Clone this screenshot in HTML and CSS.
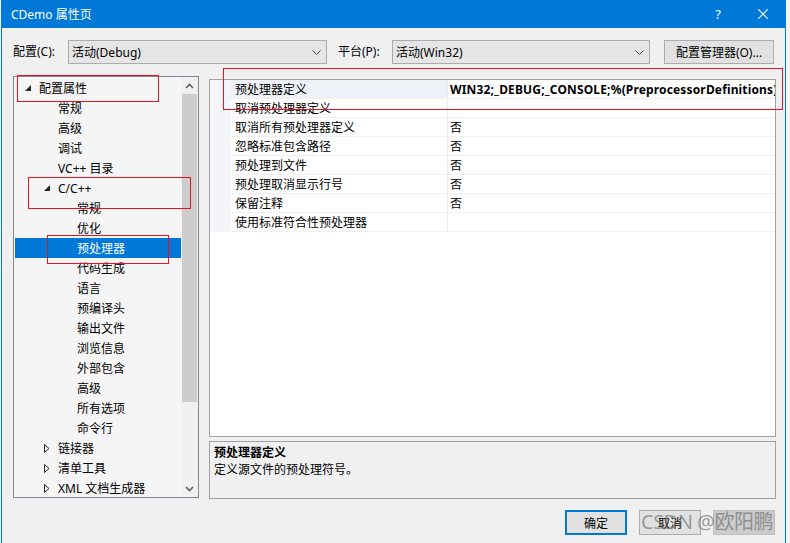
FILE: index.html
```html
<!DOCTYPE html>
<html>
	<head>
		<title>CDemo 属性页</title>
		<link rel="stylesheet" href="styles.css">
	</head>
	<body>
		<div class="window">
			<div class="titlebar">
				<span class="title">CDemo 属性页</span>
				<span class="help">?</span>
				<span class="close">
					<svg width="10" height="10" viewBox="0 0 10 10"><path d="M0 0L10 10M10 0L0 10" stroke="#fff" stroke-width="1.1"/></svg>
				</span>
			</div>

			<div class="content">
				<div class="toolbar">
					<span class="label label-config">配置(C):</span>
					<div class="combo combo-config">
						<span>活动(Debug)</span>
						<svg width="9" height="5" viewBox="0 0 9 5"><polyline points="0.5,0.5 4.5,4.5 8.5,0.5" fill="none" stroke="#444"/></svg>
					</div>
					<span class="label label-platform">平台(P):</span>
					<div class="combo combo-platform">
						<span>活动(Win32)</span>
						<svg width="9" height="5" viewBox="0 0 9 5"><polyline points="0.5,0.5 4.5,4.5 8.5,0.5" fill="none" stroke="#444"/></svg>
					</div>
					<button class="btn btn-manager">配置管理器(O)...</button>
				</div>

				<div class="main">
					<div class="tree">
						<div class="tree-list">
							<div class="node l0"><span class="twisty"><svg width="6" height="6" viewBox="0 0 6 6"><polygon points="6,0 6,6 0,6" fill="#262626"/></svg></span>配置属性</div>
							<div class="node l1"><span class="twisty"></span>常规</div>
							<div class="node l1"><span class="twisty"></span>高级</div>
							<div class="node l1"><span class="twisty"></span>调试</div>
							<div class="node l1"><span class="twisty"></span>VC++ 目录</div>
							<div class="node l1"><span class="twisty"><svg width="6" height="6" viewBox="0 0 6 6"><polygon points="6,0 6,6 0,6" fill="#262626"/></svg></span>C/C++</div>
							<div class="node l2"><span class="twisty"></span>常规</div>
							<div class="node l2"><span class="twisty"></span>优化</div>
							<div class="node l2 selected"><span class="twisty"></span>预处理器</div>
							<div class="node l2"><span class="twisty"></span>代码生成</div>
							<div class="node l2"><span class="twisty"></span>语言</div>
							<div class="node l2"><span class="twisty"></span>预编译头</div>
							<div class="node l2"><span class="twisty"></span>输出文件</div>
							<div class="node l2"><span class="twisty"></span>浏览信息</div>
							<div class="node l2"><span class="twisty"></span>外部包含</div>
							<div class="node l2"><span class="twisty"></span>高级</div>
							<div class="node l2"><span class="twisty"></span>所有选项</div>
							<div class="node l2"><span class="twisty"></span>命令行</div>
							<div class="node l1"><span class="twisty"><svg width="6" height="9" viewBox="0 0 6 9"><polygon points="0.5,0.5 5,4.5 0.5,8.5" fill="none" stroke="#262626"/></svg></span>链接器</div>
							<div class="node l1"><span class="twisty"><svg width="6" height="9" viewBox="0 0 6 9"><polygon points="0.5,0.5 5,4.5 0.5,8.5" fill="none" stroke="#262626"/></svg></span>清单工具</div>
							<div class="node l1"><span class="twisty"><svg width="6" height="9" viewBox="0 0 6 9"><polygon points="0.5,0.5 5,4.5 0.5,8.5" fill="none" stroke="#262626"/></svg></span>XML 文档生成器</div>
						</div>
						<div class="scrollbar">
							<div class="arrow">
								<svg width="9" height="6" viewBox="0 0 9 6"><polyline points="1,5 4.5,1.5 8,5" fill="none" stroke="#606060" stroke-width="1.6"/></svg>
							</div>
							<div class="track"><div class="thumb"></div></div>
							<div class="arrow">
								<svg width="9" height="6" viewBox="0 0 9 6"><polyline points="1,1 4.5,4.5 8,1" fill="none" stroke="#606060" stroke-width="1.6"/></svg>
							</div>
						</div>
					</div>

					<div class="right">
						<div class="grid">
							<div class="row active">
								<div class="gutter"></div>
								<div class="name">预处理器定义</div>
								<div class="value bold">WIN32;_DEBUG;_CONSOLE;%(PreprocessorDefinitions)</div>
							</div>
							<div class="row">
								<div class="gutter"></div>
								<div class="name">取消预处理器定义</div>
								<div class="value"></div>
							</div>
							<div class="row">
								<div class="gutter"></div>
								<div class="name">取消所有预处理器定义</div>
								<div class="value">否</div>
							</div>
							<div class="row">
								<div class="gutter"></div>
								<div class="name">忽略标准包含路径</div>
								<div class="value">否</div>
							</div>
							<div class="row">
								<div class="gutter"></div>
								<div class="name">预处理到文件</div>
								<div class="value">否</div>
							</div>
							<div class="row">
								<div class="gutter"></div>
								<div class="name">预处理取消显示行号</div>
								<div class="value">否</div>
							</div>
							<div class="row">
								<div class="gutter"></div>
								<div class="name">保留注释</div>
								<div class="value">否</div>
							</div>
							<div class="row">
								<div class="gutter"></div>
								<div class="name">使用标准符合性预处理器</div>
								<div class="value"></div>
							</div>
						</div>
						<div class="desc">
							<div class="desc-title">预处理器定义</div>
							<div class="desc-text">定义源文件的预处理符号。</div>
						</div>
					</div>
				</div>

				<div class="buttons">
					<button class="btn btn-ok">确定</button>
					<button class="btn">取消</button>
					<button class="btn btn-disabled"></button>
				</div>
			</div>
		</div>

		<!-- red marks drawn on the screenshot -->
		<div class="mark mark-1"></div>
		<div class="mark mark-2"></div>
		<div class="mark mark-3"></div>
		<div class="mark mark-4"></div>

		<div class="watermark">CSDN @欧阳鹏</div>
	</body>
</html>
```

FILE: styles.css
```css
body{
	margin: 0;
	background-color: #f4f4f4;
	font-family: "Noto Sans", "Noto Sans CJK SC", sans-serif;
	font-size: 12px;
	color: #000;
	overflow: hidden;
}

.window{
	box-sizing: border-box;
	width: 785px;
	height: 543px;
	margin-left: 1px;
	background-color: #f0f0f0;
	border-left: 1px solid #0078d7;
	border-right: 1px solid #0078d7;
}

.titlebar{
	display: flex;
	align-items: center;
	height: 28px;
	background-color: #0078d7;
	color: white;
}
.title{
	padding-left: 9px;
	font-size: 12px;
	flex: 1;
}
.help{
	width: 46px;
	text-align: center;
	font-size: 13px;
}
.close{
	width: 44px;
	display: flex;
	justify-content: center;
}

.content{
	padding: 12px 0 0 11px;
}

.toolbar{
	display: flex;
	align-items: center;
	height: 24px;
}
.label{
	line-height: 24px;
}
.label-config{
	width: 55px;
}
.label-platform{
	width: 54px;
	margin-left: 11px;
}
.combo{
	box-sizing: border-box;
	display: flex;
	align-items: center;
	justify-content: space-between;
	height: 24px;
	padding: 0 5px 0 3px;
	background-color: #e5e5e5;
	border: 1px solid #acacac;
}
.combo-config{
	width: 259px;
}
.combo-platform{
	width: 258px;
}

.btn{
	box-sizing: border-box;
	height: 25px;
	background-color: #e1e1e1;
	border: 1px solid #adadad;
	font-family: "Noto Sans", "Noto Sans CJK SC", sans-serif;
	font-size: 12px;
	color: #000;
	padding: 0;
}
.btn-manager{
	width: 110px;
	height: 24px;
	margin-left: 14px;
}

.main{
	display: flex;
	margin-top: 12px;
}

.tree{
	box-sizing: border-box;
	display: flex;
	width: 186px;
	height: 422px;
	background-color: #f5f5f5;
	border: 1px solid #828790;
}
.tree-list{
	flex: 1;
	padding: 1px 0 0 1px;
	overflow: hidden;
}
.node{
	display: flex;
	align-items: center;
	height: 20px;
	white-space: nowrap;
}
.l0{
	padding-left: 5px;
}
.l1{
	padding-left: 24px;
}
.l2{
	padding-left: 43px;
}
.twisty{
	display: flex;
	align-items: center;
	width: 19px;
	height: 20px;
	padding-left: 5px;
	box-sizing: border-box;
}
.selected{
	background-color: #0078d7;
	color: white;
}

.scrollbar{
	display: flex;
	flex-direction: column;
	width: 17px;
	background-color: #f0f0f0;
}
.arrow{
	display: flex;
	align-items: center;
	justify-content: center;
	height: 17px;
}
.track{
	flex: 1;
}
.thumb{
	height: 308px;
	margin: 0 1px;
	background-color: #cdcdcd;
}

.right{
	margin-left: 10px;
	width: 567px;
}

.grid{
	box-sizing: border-box;
	height: 358px;
	margin-top: 3px;
	background-color: white;
	border: 1px solid #a0a0a0;
	overflow: hidden;
}
.row{
	display: flex;
	height: 19px;
}
.gutter{
	width: 21px;
	background-color: #f3f5f9;
}
.name,
.value{
	box-sizing: border-box;
	padding-top: 2px;
	line-height: 16px;
	border-bottom: 1px solid #f0f0f0;
	white-space: nowrap;
}
.name{
	width: 216px;
	padding-left: 4px;
}
.value{
	flex: 1;
	padding-left: 2px;
	border-left: 1px solid #ebebeb;
	overflow: hidden;
}
.active .name{
	background-color: #eef2f8;
}
.bold{
	font-weight: bold;
	letter-spacing: 0.15px;
}

.desc{
	box-sizing: border-box;
	height: 58px;
	margin-top: 4px;
	padding: 2px 4px;
	border: 1px solid #a0a0a0;
	line-height: 17px;
}
.desc-title{
	font-weight: bold;
}

.buttons{
	display: flex;
	justify-content: flex-end;
	gap: 12px;
	width: 762px;
	margin-top: 11px;
}
.buttons .btn{
	width: 62px;
}
.btn-ok{
	border: 2px solid #0078d7;
}
.btn-disabled{
	background-color: #cccccc;
	border-color: #bfbfbf;
}

.mark{
	position: absolute;
	border: 1px solid #e81123;
}
.mark-1{
	left: 17px;
	top: 75px;
	width: 140px;
	height: 25px;
}
.mark-2{
	left: 28px;
	top: 177px;
	width: 161px;
	height: 30px;
}
.mark-3{
	left: 47px;
	top: 235px;
	width: 120px;
	height: 27px;
}
.mark-4{
	left: 223px;
	top: 68px;
	width: 558px;
	height: 40px;
}

.watermark{
	position: absolute;
	left: 641px;
	top: 508px;
	font-size: 20px;
	line-height: 28px;
	letter-spacing: -0.5px;
	color: rgba(100, 100, 100, 0.6);
	white-space: nowrap;
}
```
